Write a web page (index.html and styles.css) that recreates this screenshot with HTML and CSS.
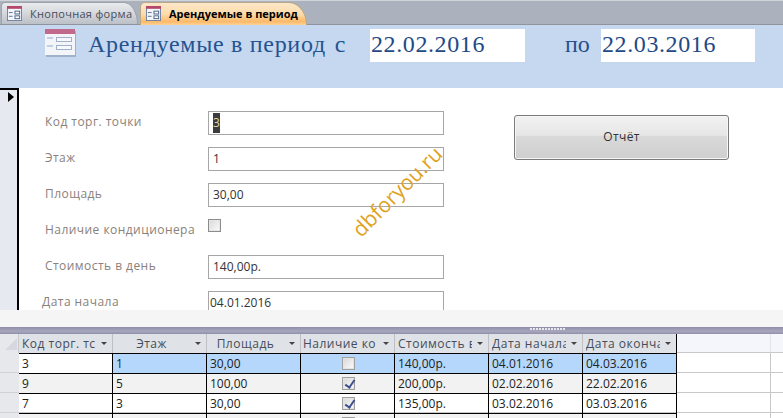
FILE: index.html
```html
<!DOCTYPE html>
<html lang="ru">
<head>
<meta charset="utf-8">
<title>Арендуемые в период</title>
<link rel="stylesheet" href="styles.css">
</head>
<body>
<div class="app">
  <div class="tabs">
    <div class="tab tab-idle">
      <svg class="tab-icon" viewBox="0 0 16 16"><rect x="0.5" y="0.5" width="15" height="15" fill="#f3f6fb" stroke="#6f7f9f"/><rect x="0" y="0" width="16" height="3" fill="#b4476a"/><path d="M2 7h4M2 11h4" stroke="#5a6f96"/><rect x="8.500" y="5.500" width="5" height="3" fill="#fff" stroke="#4a5f88"/><rect x="8.500" y="10.500" width="5" height="3" fill="#fff" stroke="#4a5f88"/></svg>
      <span>Кнопочная форма</span>
    </div>
    <div class="tab tab-active">
      <svg class="tab-icon" viewBox="0 0 16 16"><rect x="0.5" y="0.5" width="15" height="15" fill="#f3f6fb" stroke="#6f7f9f"/><rect x="0" y="0" width="16" height="3" fill="#b4476a"/><path d="M2 7h4M2 11h4" stroke="#5a6f96"/><rect x="8.500" y="5.500" width="5" height="3" fill="#fff" stroke="#4a5f88"/><rect x="8.500" y="10.500" width="5" height="3" fill="#fff" stroke="#4a5f88"/></svg>
      <span>Арендуемые в период</span>
    </div>
  </div>
  <header class="band">
    <svg class="band-icon" viewBox="0 0 31 28"><rect x="1" y="2" width="30" height="26" fill="#5a6a85" opacity=".35"/><rect x="0" y="0" width="30" height="26" fill="#f4f5f9"/><rect x="0" y="0" width="30" height="5" fill="#c26a8c"/><path d="M2 9h6M2 17h6" stroke="#c3cfe2" stroke-width="2"/><rect x="11.500" y="8.500" width="15" height="4" fill="#f7f9fc" stroke="#9fb1cc"/><rect x="11.500" y="16.500" width="15" height="4" fill="#f7f9fc" stroke="#9fb1cc"/></svg>
    <span class="band-title">Арендуемые в период<span class="band-s">с</span></span>
    <span class="band-date band-date-from">22.02.2016</span>
    <span class="band-po">по</span>
    <span class="band-date band-date-to">22.03.2016</span>
  </header>
  <section class="detail">
    <div class="selector"><span class="selector-arrow"></span></div>
    <div class="form">
      <div class="fields">
        <div class="field"><label>Код торг. точки</label><div class="input"><span class="selected">3</span></div></div>
        <div class="field"><label>Этаж</label><div class="input">1</div></div>
        <div class="field"><label>Площадь</label><div class="input">30,00</div></div>
        <div class="field field-check"><label>Наличие кондиционера</label><span class="check"></span></div>
        <div class="field"><label>Стоимость в день</label><div class="input">140,00р.</div></div>
        <div class="field field-last"><label>Дата начала</label><div class="input">04.01.2016</div></div>
      </div>
      <div class="report">Отчёт</div>
      <div class="watermark">dbforyou.ru</div>
    </div>
  </section>
  <div class="gap"></div>
  <div class="splitter"><span class="grip"></span></div>
  <div class="sheet">
    <div class="row head">
      <div class="corner"><svg viewBox="0 0 12 12" width="12" height="12"><path d="M12 0V12H0Z" fill="#d5d9df"/></svg></div>
      <div class="th left"><span>Код торг. тс</span><i></i></div>
      <div class="th"><span>Этаж</span><i></i></div>
      <div class="th"><span>Площадь</span><i></i></div>
      <div class="th"><span>Наличие ко</span><i></i></div>
      <div class="th left"><span>Стоимость в</span><i></i></div>
      <div class="th left"><span>Дата начала</span><i></i></div>
      <div class="th left"><span>Дата окончания</span><i></i></div>
      <div class="blank"></div>
    </div>
    <div class="row r1">
      <div class="rs"></div><div class="td first">3</div><div class="td">1</div><div class="td">30,00</div><div class="td ctr"><span class="box"></span></div><div class="td">140,00р.</div><div class="td">04.01.2016</div><div class="td">04.03.2016</div><div class="blank"></div>
    </div>
    <div class="row r2">
      <div class="rs"></div><div class="td">9</div><div class="td">5</div><div class="td">100,00</div><div class="td ctr"><span class="box on"></span></div><div class="td">200,00р.</div><div class="td">02.02.2016</div><div class="td">22.02.2016</div><div class="blank"></div>
    </div>
    <div class="row">
      <div class="rs"></div><div class="td">7</div><div class="td">3</div><div class="td">30,00</div><div class="td ctr"><span class="box on"></span></div><div class="td">135,00р.</div><div class="td">03.02.2016</div><div class="td">03.03.2016</div><div class="blank"></div>
    </div>
    <div class="row r2">
      <div class="rs"></div><div class="td"></div><div class="td"></div><div class="td"></div><div class="td ctr"><span class="box"></span></div><div class="td"></div><div class="td"></div><div class="td"></div><div class="blank"></div>
    </div>
  </div>
</div>
</body>
</html>
```

FILE: styles.css
```css
* { box-sizing: border-box; }
html, body { margin: 0; padding: 0; }
body { width: 783px; height: 418px; overflow: hidden; background: #fff; font-family: "Open Sans", "Noto Sans", sans-serif; }
.app { width: 783px; height: 418px; display: flex; flex-direction: column; overflow: hidden; }

.tabs { height: 25px; flex: none; display: flex; align-items: flex-end; padding: 1px 0 0 1px; background: #abb2bd; border-top: 1px solid #d0d3d8; border-bottom: 1px solid #8f949c; }
.tab { display: flex; align-items: center; font-size: 11px; white-space: nowrap; }
.tab-idle { width: 137px; height: 22px; padding: 0 0 1px 5px; gap: 8px; color: #454d5b; letter-spacing: .3px; border-radius: 4px 14px 0 0 / 4px 22px 0 0; border: 1px solid #9ea4ad; border-bottom: none; background: linear-gradient(#e9ebee, #d4d7dc 50%, #bcc0c7); }
.tab-active { width: 167px; height: 23px; margin: 0 0 -1px 2px; padding: 0 0 1px 5px; gap: 8px; color: #000; font-weight: 700; border-radius: 5px 18px 0 0 / 5px 23px 0 0; border: 1px solid #b7a98c; border-bottom: none; background: linear-gradient(#fbe7c9, #fddcaa 50%, #fcb968 85%, #fbd49c); }
.tab-icon { width: 15px; height: 15px; flex: none; }

.band { height: 63px; flex: none; display: flex; align-items: flex-start; background: #c6d8f0; padding: 4px 0 0 45px; color: #264f8c; font-family: "Liberation Serif", serif; font-size: 24px; }
.band-icon { width: 31px; height: 28px; flex: none; }
.band-title { margin-left: 12px; line-height: 30px; letter-spacing: .7px; white-space: nowrap; width: 282px; flex: none; color: #24538f; }
.band-s { margin-left: 9px; }
.band-date { height: 33px; line-height: 30px; background: #fff; padding-left: 1px; color: #1f4a86; letter-spacing: .6px; flex: none; }
.band-date-from { width: 155px; }
.band-po { width: 76px; padding-left: 40px; line-height: 30px; flex: none; }
.band-date-to { width: 154px; }

.detail { height: 222px; flex: none; display: flex; }
.selector { width: 19px; flex: none; background: #e6eaf0; border-top: 2px solid #000; border-right: 2px solid #000; padding: 2px 0 0 8px; }
.selector-arrow { display: block; width: 0; height: 0; border-left: 6px solid #000; border-top: 5px solid transparent; border-bottom: 5px solid transparent; }
.form { flex: 1; position: relative; display: flex; padding: 23px 0 0 23px; overflow: hidden; }
.fields { width: 402px; flex: none; display: flex; flex-direction: column; gap: 12px; }
.field { display: flex; height: 24px; flex: none; align-items: flex-start; }
.field label { width: 166px; flex: none; padding: 2px 0 0 3px; font-size: 12px; letter-spacing: .45px; line-height: 18px; color: #8a817a; white-space: nowrap; }
.input { width: 236px; height: 24px; flex: none; border: 1px solid #a6a6a6; font-size: 12px; line-height: 22px; padding: 0 0 0 4px; color: #333; }
.selected { display: inline-block; width: 7px; height: 20px; line-height: 20px; background: #3c3c3c; color: #e0d8a0; vertical-align: top; margin-top: 1px; }
.check { width: 13px; height: 13px; border: 1px solid #8c8c8c; background: linear-gradient(135deg, #d9d9d9, #fbfbfb); box-shadow: inset 0 0 0 1px #e6e6e6; }
.field-last label { padding-left: 0; }
.field-last .input { padding-left: 1px; }
.report { width: 215px; height: 45px; margin: 4px 0 0 70px; flex: none; border: 1px solid #7b7b7b; border-radius: 3px; background: linear-gradient(#f2f2f2, #e6e6e6 45%, #d9d9d9 47%, #cfcfcf); font-size: 12px; letter-spacing: .4px; color: #333; display: flex; align-items: center; justify-content: center; padding-bottom: 2px; box-shadow: inset 0 0 0 1px #f6f6f6; }
.watermark { position: absolute; left: 345px; top: 129px; font-family: "Open Sans", sans-serif; font-size: 21px; color: #e0a21c; transform: rotate(-45deg); transform-origin: left bottom; white-space: nowrap; line-height: 24px; }

.gap { height: 17px; flex: none; background: #f5f5f5; }
.splitter { height: 7px; flex: none; padding-left: 530px; background: linear-gradient(#8d8da8, #a7a7bd 60%, #9090aa); display: flex; align-items: flex-start; }
.grip { width: 35px; height: 2px; margin-top: 1px; background: repeating-linear-gradient(90deg, #e8e8ef 0 2px, transparent 2px 3px); }

.sheet { flex: 1; overflow: hidden; }
.row { display: grid; grid-template-columns: 19px 94px 94px 94px 94px 94px 94px 94px 94px 1fr; height: 20px; background: linear-gradient(#c8c8c8, #c8c8c8) bottom / 100% 1px no-repeat #fff; font-size: 12px; color: #222; }
.row.head { height: 19px; background: linear-gradient(#c8c8c8, #c8c8c8) bottom / 100% 1px no-repeat #f4f6fc; }
.corner { background: #e6e8eb; display: flex; align-items: center; justify-content: center; padding: 0 0 0 4px; border-right: 1px solid #c7c9cc; }
.th { position: relative; background: #dfe2e6; border-right: 1px solid #bdbfc4; color: #454d5b; font-size: 12px; letter-spacing: .5px; line-height: 19px; text-align: center; padding-right: 16px; white-space: nowrap; }
.th span { display: block; overflow: hidden; }
.th.left { text-align: left; padding-left: 3px; }
.th:nth-child(8) { border-right: 1px solid #000; }
.th i { position: absolute; right: 5px; top: 8px; width: 0; height: 0; border-left: 3px solid transparent; border-right: 3px solid transparent; border-top: 3px solid #444; }
.row.head .blank { border-bottom: 1px solid #c8c8c8; border-right: 1px solid #e2e4ea; }
.rs { background: #e6e8eb; border-bottom: 1px solid #d0d2d6; }
.td { border-top: 1px solid #000; border-right: 1px solid #000; line-height: 19px; padding-left: 3px; white-space: nowrap; overflow: hidden; }
.r1 .td { background: #b5d7fb; }
.r2 .td { background: #f2f2f2; }
.r1 .td.first { background: #fff; }
.td.ctr { display: flex; align-items: center; padding: 0 0 1px 41px; }
.blank { border-bottom: 1px solid #c8c8c8; border-right: 1px solid #c8c8c8; }
.box { display: block; width: 13px; height: 13px; border: 1px solid #a0a0a0; background: linear-gradient(135deg, #d6d6d6, #fdfdfd); box-shadow: inset 0 0 0 1px #e4e4e4; position: relative; }
.box.on::after { content: ""; position: absolute; left: 4px; top: 0; width: 4px; height: 8px; border-right: 2px solid #3d4f8f; border-bottom: 2px solid #3d4f8f; transform: rotate(35deg); }
```
